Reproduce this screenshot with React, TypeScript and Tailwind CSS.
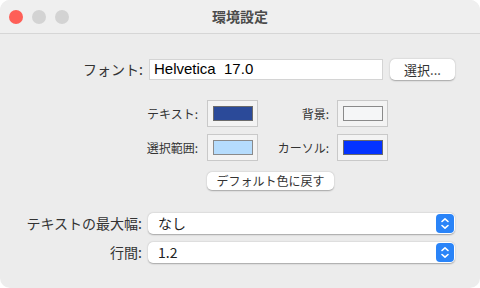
import React from "react";

const jp = { fontFamily: '"Noto Sans CJK JP", "Noto Sans", sans-serif' };
const latin = { fontFamily: '"Liberation Sans", "Noto Sans CJK JP", sans-serif' };

function ColorWell({ color, border }: { color: string; border: string }) {
  return (
    <div className="flex h-[27px] w-[51px] items-center justify-center border border-[#c9c9c9] bg-[#f3f3f3]">
      <div className="h-[15px] w-[40px] border" style={{ backgroundColor: color, borderColor: border }} />
    </div>
  );
}

function Stepper() {
  return (
    <div className="flex h-[19px] w-[18px] items-center justify-center rounded-[4px] bg-[#2a84f8]">
      <svg width="10" height="13" viewBox="0 0 10 13" fill="none" stroke="white" strokeWidth="1.6" strokeLinecap="round" strokeLinejoin="round">
        <path d="M2 4.5 L5 1.8 L8 4.5" />
        <path d="M2 8.5 L5 11.2 L8 8.5" />
      </svg>
    </div>
  );
}

function SelectRow({ label, value }: { label: string; value: string }) {
  return (
    <div className="flex items-center">
      <div className="w-[142px] text-right text-[14px] text-[#333]" style={jp}>
        {label}
      </div>
      <div className="ml-[6px] flex h-[21px] w-[307px] items-center justify-between rounded-[5px] bg-white pl-[10px] pr-[1px] shadow-[0_0.5px_1.5px_rgba(0,0,0,0.3)]">
        <span className="text-[14px] text-[#222]" style={jp}>
          {value}
        </span>
        <Stepper />
      </div>
    </div>
  );
}

export default function App() {
  return (
    <div className="h-[288px] w-[480px] bg-white">
      <div className="flex h-[288px] w-[480px] flex-col overflow-hidden rounded-[10px] bg-[#ececec]">
        <div className="relative flex h-[34px] items-center justify-center border-b border-[#d6d6d6] bg-[#efefef]">
          <div className="absolute left-[9px] top-[10px] flex gap-[9px]">
            <div className="h-[14px] w-[14px] rounded-full bg-[#fe5f57]" />
            <div className="h-[14px] w-[14px] rounded-full bg-[#d3d3d3]" />
            <div className="h-[14px] w-[14px] rounded-full bg-[#d3d3d3]" />
          </div>
          <span className="text-[14px] font-bold text-[#4b4b4b]" style={jp}>
            環境設定
          </span>
        </div>

        <div className="flex flex-col pt-[25px]">
          <div className="flex items-center">
            <div className="w-[143px] text-right text-[14px] text-[#333]" style={jp}>
              フォント:
            </div>
            <div className="ml-[6px] flex h-[21px] w-[234px] items-center border border-[#d4d4d4] bg-white pl-[4px] text-[15px] text-black" style={latin}>
              Helvetica&nbsp;&nbsp;17.0
            </div>
            <div className="ml-[7px] flex h-[21px] w-[65px] items-center justify-center rounded-[5px] bg-white text-[13px] text-[#333] shadow-[0_0.5px_1.5px_rgba(0,0,0,0.3)]" style={jp}>
              選択...
            </div>
          </div>

          <div className="mt-[20px] grid grid-cols-[200px_51px_79px_51px] items-center gap-y-[7px]">
            <div className="pr-[2px] text-right text-[12px] text-[#333]" style={jp}>テキスト:</div>
            <div className="ml-[7px]"><ColorWell color="#2b4a99" border="#6b6b6b" /></div>
            <div className="pr-[1px] text-right text-[12px] text-[#333]" style={jp}>背景:</div>
            <div className="ml-[7px]"><ColorWell color="#f5f6f7" border="#8a8a8a" /></div>
            <div className="pr-[2px] text-right text-[12px] text-[#333]" style={jp}>選択範囲:</div>
            <div className="ml-[7px]"><ColorWell color="#b5dcfd" border="#8a8a8a" /></div>
            <div className="pr-[1px] text-right text-[12px] text-[#333]" style={jp}>カーソル:</div>
            <div className="ml-[7px]"><ColorWell color="#0433ff" border="#6b6b6b" /></div>
          </div>

          <div className="ml-[207px] mt-[11px] flex h-[18px] w-[127px] items-center justify-center rounded-[5px] bg-white text-[12px] text-[#333] shadow-[0_0.5px_1.5px_rgba(0,0,0,0.3)]" style={jp}>
            デフォルト色に戻す
          </div>

          <div className="mt-[23px] flex flex-col gap-[8px]">
            <SelectRow label="テキストの最大幅:" value="なし" />
            <SelectRow label="行間:" value="1.2" />
          </div>
        </div>
      </div>
    </div>
  );
}
